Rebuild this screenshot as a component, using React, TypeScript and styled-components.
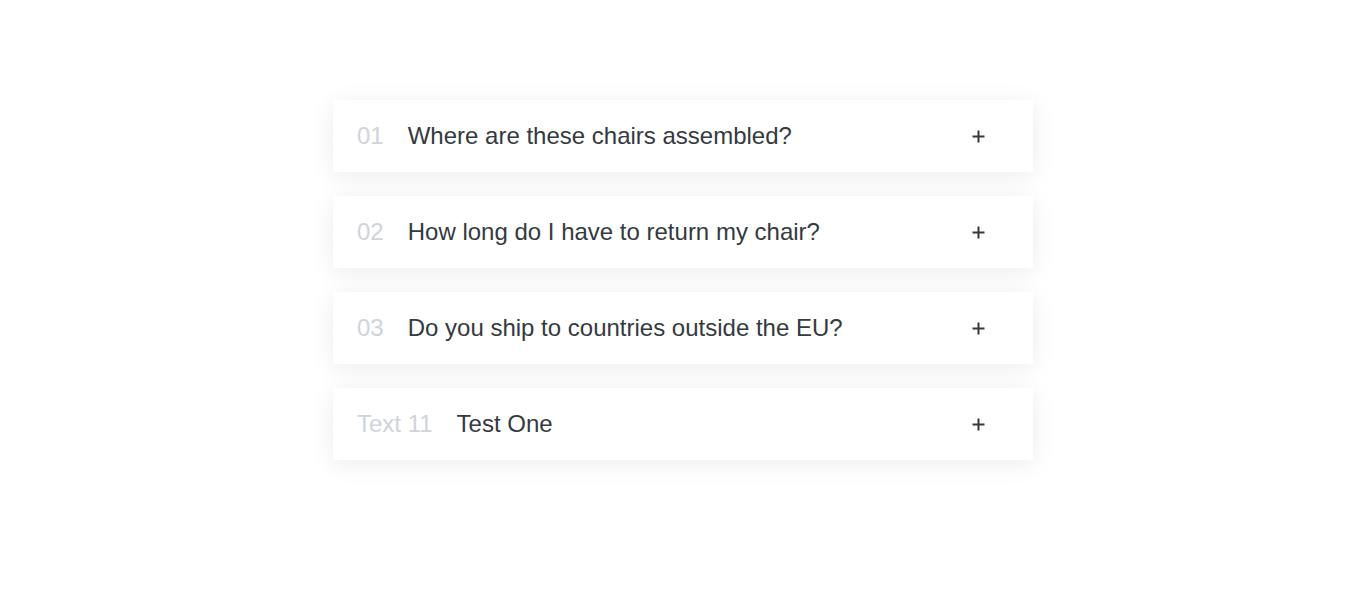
import React from "react";
import styled, { createGlobalStyle } from "styled-components";

const Global = createGlobalStyle`
  body { margin: 0; background: #fff; font-family: "Liberation Sans", Arial, sans-serif; }
`;

const List = styled.div`
  width: 700px;
  margin: 0 auto;
  padding: 100px 0 120px;
  display: flex;
  flex-direction: column;
  gap: 24px;
`;

const Item = styled.div`
  display: flex;
  align-items: center;
  height: 72px;
  box-sizing: border-box;
  padding: 0 48px 0 24px;
  background: #fff;
  box-shadow: 0 4px 24px rgba(0, 0, 0, 0.08);
`;

const Num = styled.span`
  font-size: 24px;
  color: #ced4da;
  margin-right: 24px;
`;

const Title = styled.span`
  font-size: 24px;
  color: #343a40;
  flex: 1;
`;

const Icon = styled.svg`
  width: 13px;
  height: 13px;
  display: block;
`;

const Plus = () => (
  <Icon viewBox="0 0 13 13">
    <path d="M6.5 0.5v12M0.5 6.5h12" stroke="#343a40" strokeWidth="2" fill="none" />
  </Icon>
);

const items = [
  { n: "01", t: "Where are these chairs assembled?" },
  { n: "02", t: "How long do I have to return my chair?" },
  { n: "03", t: "Do you ship to countries outside the EU?" },
  { n: "Text 11", t: "Test One" },
];

export default function App() {
  return (
    <>
      <Global />
      <List>
        {items.map((i) => (
          <Item key={i.n}>
            <Num>{i.n}</Num>
            <Title>{i.t}</Title>
            <Plus />
          </Item>
        ))}
      </List>
    </>
  );
}
